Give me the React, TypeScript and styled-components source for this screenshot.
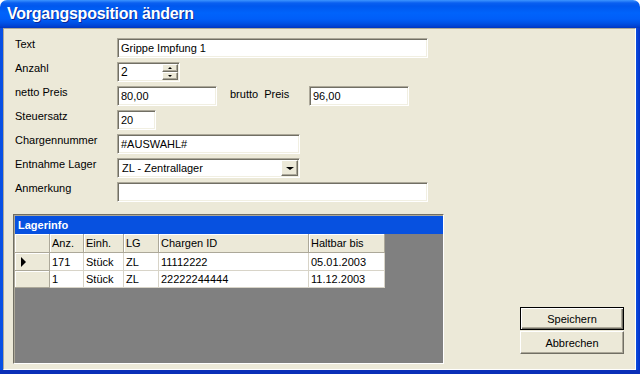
import { Fragment } from "react";
import styled, { createGlobalStyle, css } from "styled-components";

const GlobalStyle = createGlobalStyle`
  body {
    margin: 0;
    background: #ffffff;
    font-family: "Liberation Sans", Arial, sans-serif;
  }
`;

const face = "#ECE9D8";

const Window = styled.div`
  width: 640px;
  height: 374px;
  display: flex;
  flex-direction: column;
  border-radius: 7px 7px 0 0;
  overflow: hidden;
`;

const TitleBar = styled.div`
  height: 28px;
  flex: none;
  padding-left: 7px;
  background: linear-gradient(
    180deg,
    #3d95ff 0px,
    #0a5ff0 3px,
    #0058ee 6px,
    #0063fb 13px,
    #005ef8 19px,
    #0052e6 23px,
    #0043d4 26px,
    #0036c0 28px
  );
  color: #ffffff;
  font: bold 16px/28px "Liberation Sans", Arial, sans-serif;
  letter-spacing: -0.25px;
  text-shadow: 1px 1px 0 #0a2a9a;
`;

const Frame = styled.div`
  flex: 1;
  display: flex;
  padding: 0 4px 4px 3px;
  background: linear-gradient(90deg, #0a4fe0 0px, #0550e8 3px, #0a4ee0 calc(100% - 4px), #0331c8 100%);
  box-shadow: inset 0 -4px 0 #0a2fb8;
`;

const Client = styled.div`
  flex: 1;
  display: flex;
  flex-direction: column;
  background: ${face};
  border: 1px solid;
  border-color: #aca899 #ffffff #ffffff #aca899;
  padding: 9px 11px 5px 9px;
  font-size: 11px;
  color: #000000;
`;

const Form = styled.div`
  display: grid;
  grid-template-columns: 102px 1fr;
  grid-auto-rows: 20px;
  row-gap: 4px;
  margin-left: 2px;
`;

const Label = styled.div`
  line-height: 12px;
  white-space: pre;
`;

const InlineLabel = styled(Label)`
  width: 79px;
  margin-left: 13px;
  line-height: 16px;
`;

const Line = styled.div`
  display: flex;
  align-items: flex-start;
`;

const sunken = css`
  box-sizing: border-box;
  height: 20px;
  background: #ffffff;
  border: 1px solid;
  border-color: #aca899 #ffffff #ffffff #aca899;
  box-shadow: inset 1px 1px 0 #716f64, inset -1px -1px 0 #f1efe2;
`;

const TextBox = styled.div<{ $w: number }>`
  ${sunken};
  width: ${(p) => p.$w}px;
  padding: 0 3px;
  line-height: 18px;
  white-space: pre;
  overflow: hidden;
`;

const SpinBox = styled(TextBox)`
  display: flex;
  justify-content: space-between;
  padding: 1px 1px 1px 3px;
  line-height: 16px;
  font-size: 12px;
`;

const SpinButtons = styled.div`
  display: flex;
  flex-direction: column;
  width: 16px;
`;

const raised = css`
  background: ${face};
  border: 1px solid;
  border-color: #ffffff #716f64 #716f64 #ffffff;
  box-shadow: inset -1px -1px 0 #aca899;
  box-sizing: border-box;
`;

const SpinHalf = styled.div`
  ${raised};
  height: 8px;
  display: flex;
  align-items: center;
  justify-content: center;
`;

const Arrow = styled.div<{ $dir: "up" | "down"; $size: number }>`
  width: 0;
  height: 0;
  border-left: ${(p) => p.$size}px solid transparent;
  border-right: ${(p) => p.$size}px solid transparent;
  ${(p) =>
    p.$dir === "up"
      ? `border-bottom: ${Math.ceil(p.$size / 1.5)}px solid #000;`
      : `border-top: ${Math.ceil(p.$size / 1.5)}px solid #000;`}
`;

const Combo = styled(TextBox)`
  display: flex;
  justify-content: space-between;
  padding: 1px 1px 1px 4px;
  line-height: 16px;
`;

const DropButton = styled.div`
  ${raised};
  width: 17px;
  height: 16px;
  display: flex;
  align-items: center;
  justify-content: center;
`;

const Lower = styled.div`
  flex: 1;
  margin-top: 12px;
  display: flex;
  align-items: flex-end;
  justify-content: space-between;
`;

const GridPanel = styled.div`
  width: 431px;
  height: 150px;
  box-sizing: border-box;
  background: #808080;
  border-style: solid;
  border-width: 1px;
  border-color: #716f64 #ffffff #ffffff #716f64;
  box-shadow: inset 1px 1px 0 #aca899;
  padding: 1px 0 0 1px;
  display: flex;
  flex-direction: column;
`;

const GridCaption = styled.div`
  height: 18px;
  background: #0751e0;
  color: #ffffff;
  font-weight: bold;
  line-height: 18px;
  padding-left: 3px;
`;

const Table = styled.div`
  display: grid;
  grid-template-columns: 35px 34px 40px 35px 150px 76px;
  grid-template-rows: 19px 18px 17px;
  width: 370px;
`;

const Cell = styled.div<{ $kind: "head" | "rowhead" | "corner" | "data" }>`
  box-sizing: border-box;
  padding-left: 2px;
  white-space: nowrap;
  overflow: hidden;
  display: flex;
  align-items: center;
  ${(p) =>
    p.$kind === "data"
      ? css`
          background: #ffffff;
          border-right: 1px solid #d8d4c8;
          border-bottom: 1px solid #d8d4c8;
        `
      : css`
          background: ${face};
          border-right: 1px solid #aca899;
          border-bottom: 1px solid #aca899;
          box-shadow: inset 1px 1px 0 #ffffff;
        `}
  ${(p) => p.$kind === "rowhead" && "padding-left: 6px;"}
`;

const Pointer = styled.div`
  width: 0;
  height: 0;
  border-top: 5px solid transparent;
  border-bottom: 5px solid transparent;
  border-left: 5px solid #000;
`;

const ButtonColumn = styled.div`
  display: flex;
  flex-direction: column;
  gap: 1px;
  margin-bottom: 10px;
`;

const Button = styled.div<{ $default?: boolean }>`
  width: 104px;
  height: 23px;
  box-sizing: border-box;
  background: ${face};
  display: flex;
  align-items: center;
  justify-content: center;
  border: 1px solid;
  ${(p) =>
    p.$default
      ? css`
          border-color: #000000;
          box-shadow: inset 1px 1px 0 #ffffff, inset -1px -1px 0 #716f64, inset -2px -2px 0 #aca899;
        `
      : css`
          border-color: #ffffff #716f64 #716f64 #ffffff;
          box-shadow: inset -1px -1px 0 #aca899;
        `}
`;

const columns = ["Anz.", "Einh.", "LG", "Chargen ID", "Haltbar bis"];

const rows = [
  ["171", "Stück", "ZL", "11112222", "05.01.2003"],
  ["1", "Stück", "ZL", "22222244444", "11.12.2003"],
];

export default function App() {
  return (
    <>
      <GlobalStyle />
      <Window>
        <TitleBar>Vorgangsposition ändern</TitleBar>
        <Frame>
          <Client>
            <Form>
              <Label>Text</Label>
              <TextBox $w={311}>Grippe Impfung 1</TextBox>

              <Label>Anzahl</Label>
              <SpinBox $w={63}>
                <span>2</span>
                <SpinButtons>
                  <SpinHalf>
                    <Arrow $dir="up" $size={2} />
                  </SpinHalf>
                  <SpinHalf>
                    <Arrow $dir="down" $size={2} />
                  </SpinHalf>
                </SpinButtons>
              </SpinBox>

              <Label>netto Preis</Label>
              <Line>
                <TextBox $w={100}>80,00</TextBox>
                <InlineLabel>brutto  Preis</InlineLabel>
                <TextBox $w={100}>96,00</TextBox>
              </Line>

              <Label>Steuersatz</Label>
              <TextBox $w={39}>20</TextBox>

              <Label>Chargennummer</Label>
              <TextBox $w={183}>#AUSWAHL#</TextBox>

              <Label>Entnahme Lager</Label>
              <Combo $w={183}>
                <span>ZL - Zentrallager</span>
                <DropButton>
                  <Arrow $dir="down" $size={4} />
                </DropButton>
              </Combo>

              <Label>Anmerkung</Label>
              <TextBox $w={311} />
            </Form>

            <Lower>
              <GridPanel>
                <GridCaption>Lagerinfo</GridCaption>
                <Table>
                  <Cell $kind="corner" />
                  {columns.map((c) => (
                    <Cell key={c} $kind="head">
                      {c}
                    </Cell>
                  ))}
                  {rows.map((r, i) => (
                    <Fragment key={i}>
                      <Cell $kind="rowhead">{i === 0 && <Pointer />}</Cell>
                      {r.map((v, j) => (
                        <Cell key={j} $kind="data">
                          {v}
                        </Cell>
                      ))}
                    </Fragment>
                  ))}
                </Table>
              </GridPanel>
              <ButtonColumn>
                <Button $default>Speichern</Button>
                <Button>Abbrechen</Button>
              </ButtonColumn>
            </Lower>
          </Client>
        </Frame>
      </Window>
    </>
  );
}
